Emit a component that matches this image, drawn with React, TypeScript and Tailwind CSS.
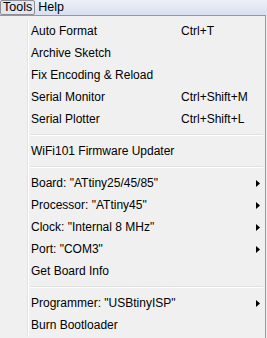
import { ReactNode } from "react";

type Item =
  | { kind: "item"; label: string; shortcut?: string; submenu?: boolean }
  | { kind: "sep" };

const ITEMS: Item[] = [
  { kind: "item", label: "Auto Format", shortcut: "Ctrl+T" },
  { kind: "item", label: "Archive Sketch" },
  { kind: "item", label: "Fix Encoding & Reload" },
  { kind: "item", label: "Serial Monitor", shortcut: "Ctrl+Shift+M" },
  { kind: "item", label: "Serial Plotter", shortcut: "Ctrl+Shift+L" },
  { kind: "sep" },
  { kind: "item", label: "WiFi101 Firmware Updater" },
  { kind: "sep" },
  { kind: "item", label: 'Board: "ATtiny25/45/85"', submenu: true },
  { kind: "item", label: 'Processor: "ATtiny45"', submenu: true },
  { kind: "item", label: 'Clock: "Internal 8 MHz"', submenu: true },
  { kind: "item", label: 'Port: "COM3"', submenu: true },
  { kind: "item", label: "Get Board Info" },
  { kind: "sep" },
  { kind: "item", label: 'Programmer: "USBtinyISP"', submenu: true },
  { kind: "item", label: "Burn Bootloader" },
];

function Arrow() {
  return (
    <svg width="4" height="7" viewBox="0 0 4 7" className="shrink-0">
      <path d="M0 0 L4 3.5 L0 7 Z" fill="#000" />
    </svg>
  );
}

function MenuBarButton({ children, active }: { children: ReactNode; active?: boolean }) {
  return (
    <div
      className={
        active
          ? "flex h-[15px] items-center rounded-[2px] border border-[#8c8f96] bg-[#e3e6ee] px-[2px] leading-none"
          : "flex h-[15px] items-center border border-transparent px-[2px] leading-none"
      }
    >
      {children}
    </div>
  );
}

export default function App() {
  return (
    <div
      className="h-[338px] w-[267px] overflow-hidden bg-[#f0f0f0] text-[12px] text-black"
      style={{ fontFamily: '"Liberation Sans", Arial, sans-serif' }}
    >
      <div className="flex h-[15px] items-start bg-gradient-to-b from-[#eef0f8] to-[#d9dff0] text-[12.5px]">
        <MenuBarButton active>Tools</MenuBarButton>
        <MenuBarButton>Help</MenuBarButton>
      </div>
      <div className="flex w-[266px] border-t border-r border-b border-[#979797] bg-[#f0f0f0] pt-[4px] pb-[2px]">
        <div className="w-[28px] shrink-0 border-r border-[#e2e3e3]" />
        <div className="w-px shrink-0 bg-white" />
        <div className="flex flex-1 flex-col">
          {ITEMS.map((it, i) =>
            it.kind === "sep" ? (
              <div key={i} className="flex h-[10px] flex-col justify-center pl-px pr-[2px]">
                <div className="border-t border-b border-t-[#e0e0e0] border-b-white" />
              </div>
            ) : (
              <div key={i} className="flex h-[22px] items-center pl-[2px] pr-[5px]">
                <span className="w-[150px] shrink-0 whitespace-nowrap">{it.label}</span>
                <span className="flex-1 whitespace-nowrap">{it.shortcut}</span>
                {it.submenu && <Arrow />}
              </div>
            )
          )}
        </div>
      </div>
    </div>
  );
}
